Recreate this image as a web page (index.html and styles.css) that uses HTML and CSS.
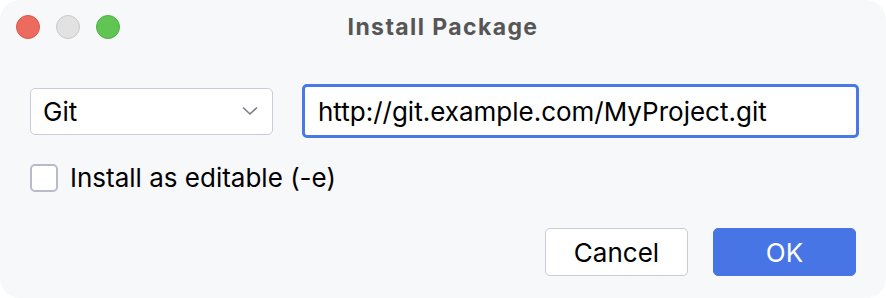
FILE: index.html
```html
<!DOCTYPE html>
<html lang="en">
<head>
  <meta charset="UTF-8" />
  <title>Install Package</title>
  <link rel="stylesheet" href="styles.css">
</head>
<body>
  <div class="window">
    <div class="titlebar">
      <div class="lights">
        <span class="light red"></span>
        <span class="light gray"></span>
        <span class="light green"></span>
      </div>
      <div class="title">Install Package</div>
    </div>

    <div class="content">
      <div class="row">
        <div class="combo">
          <span>Git</span>
          <svg width="16" height="10" viewBox="0 0 16 10"><path d="M1 1.5 L8 8 L15 1.5" fill="none" stroke="#7a7d85" stroke-width="1.6"/></svg>
        </div>
        <div class="field">http://git.example.com/MyProject.git</div>
      </div>

      <label class="check">
        <span class="box"></span>
        <span>Install as editable (-e)</span>
      </label>

      <div class="buttons">
        <button class="btn">Cancel</button>
        <button class="btn primary">OK</button>
      </div>
    </div>
  </div>
</body>
</html>
```

FILE: styles.css
```css
html, body {
  margin: 0;
  background: #ffffff;
}
body {
  font-family: Inter, "Liberation Sans", sans-serif;
  color: #000;
}
.window {
  width: 886px;
  height: 298px;
  box-sizing: border-box;
  background: #f7f8fa;
  border-radius: 20px;
  overflow: hidden;
}
.titlebar {
  position: relative;
  height: 54px;
  display: flex;
  align-items: center;
  justify-content: center;
}
.lights {
  position: absolute;
  left: 16px;
  top: 15px;
  display: flex;
  gap: 16px;
}
.light {
  width: 24px;
  height: 24px;
  border-radius: 50%;
  box-sizing: border-box;
}
.red { background: #ed6a5e; border: 1px solid #d5574b; }
.gray { background: #e2e2e2; border: 1px solid #c8c8c8; }
.green { background: #61c554; border: 1px solid #4fae44; }
.title {
  font-size: 23px;
  font-weight: 700;
  letter-spacing: 1.4px;
  color: #565656;
}
.content {
  padding: 30px 27px 0 30px;
}
.row {
  display: flex;
  align-items: center;
  gap: 29px;
}
.combo {
  width: 243px;
  height: 47px;
  box-sizing: border-box;
  background: #fff;
  border: 1.5px solid #c9ccd6;
  border-radius: 5px;
  display: flex;
  align-items: center;
  justify-content: space-between;
  padding: 0 14px 0 12px;
  font-size: 26px;
}
.field {
  flex: 1;
  height: 54px;
  box-sizing: border-box;
  background: #fff;
  border: 3px solid #4a78e6;
  border-radius: 5px;
  display: flex;
  align-items: center;
  padding-left: 13px;
  font-size: 26px;
}
.check {
  display: flex;
  align-items: center;
  gap: 12px;
  margin-top: 24px;
  font-size: 26px;
}
.box {
  width: 28px;
  height: 28px;
  box-sizing: border-box;
  background: #fff;
  border: 2px solid #b9bcc8;
  border-radius: 5px;
}
.buttons {
  display: flex;
  justify-content: flex-end;
  gap: 25px;
  margin-top: 35px;
  padding-right: 3px;
}
.btn {
  width: 143px;
  height: 48px;
  font-family: Inter, "Liberation Sans", sans-serif;
  font-size: 26px;
  background: #fff;
  border: 1.5px solid #c9ccd6;
  border-radius: 5px;
  color: #000;
}
.btn.primary {
  background: #4775e5;
  border-color: #4775e5;
  color: #fff;
}
```
